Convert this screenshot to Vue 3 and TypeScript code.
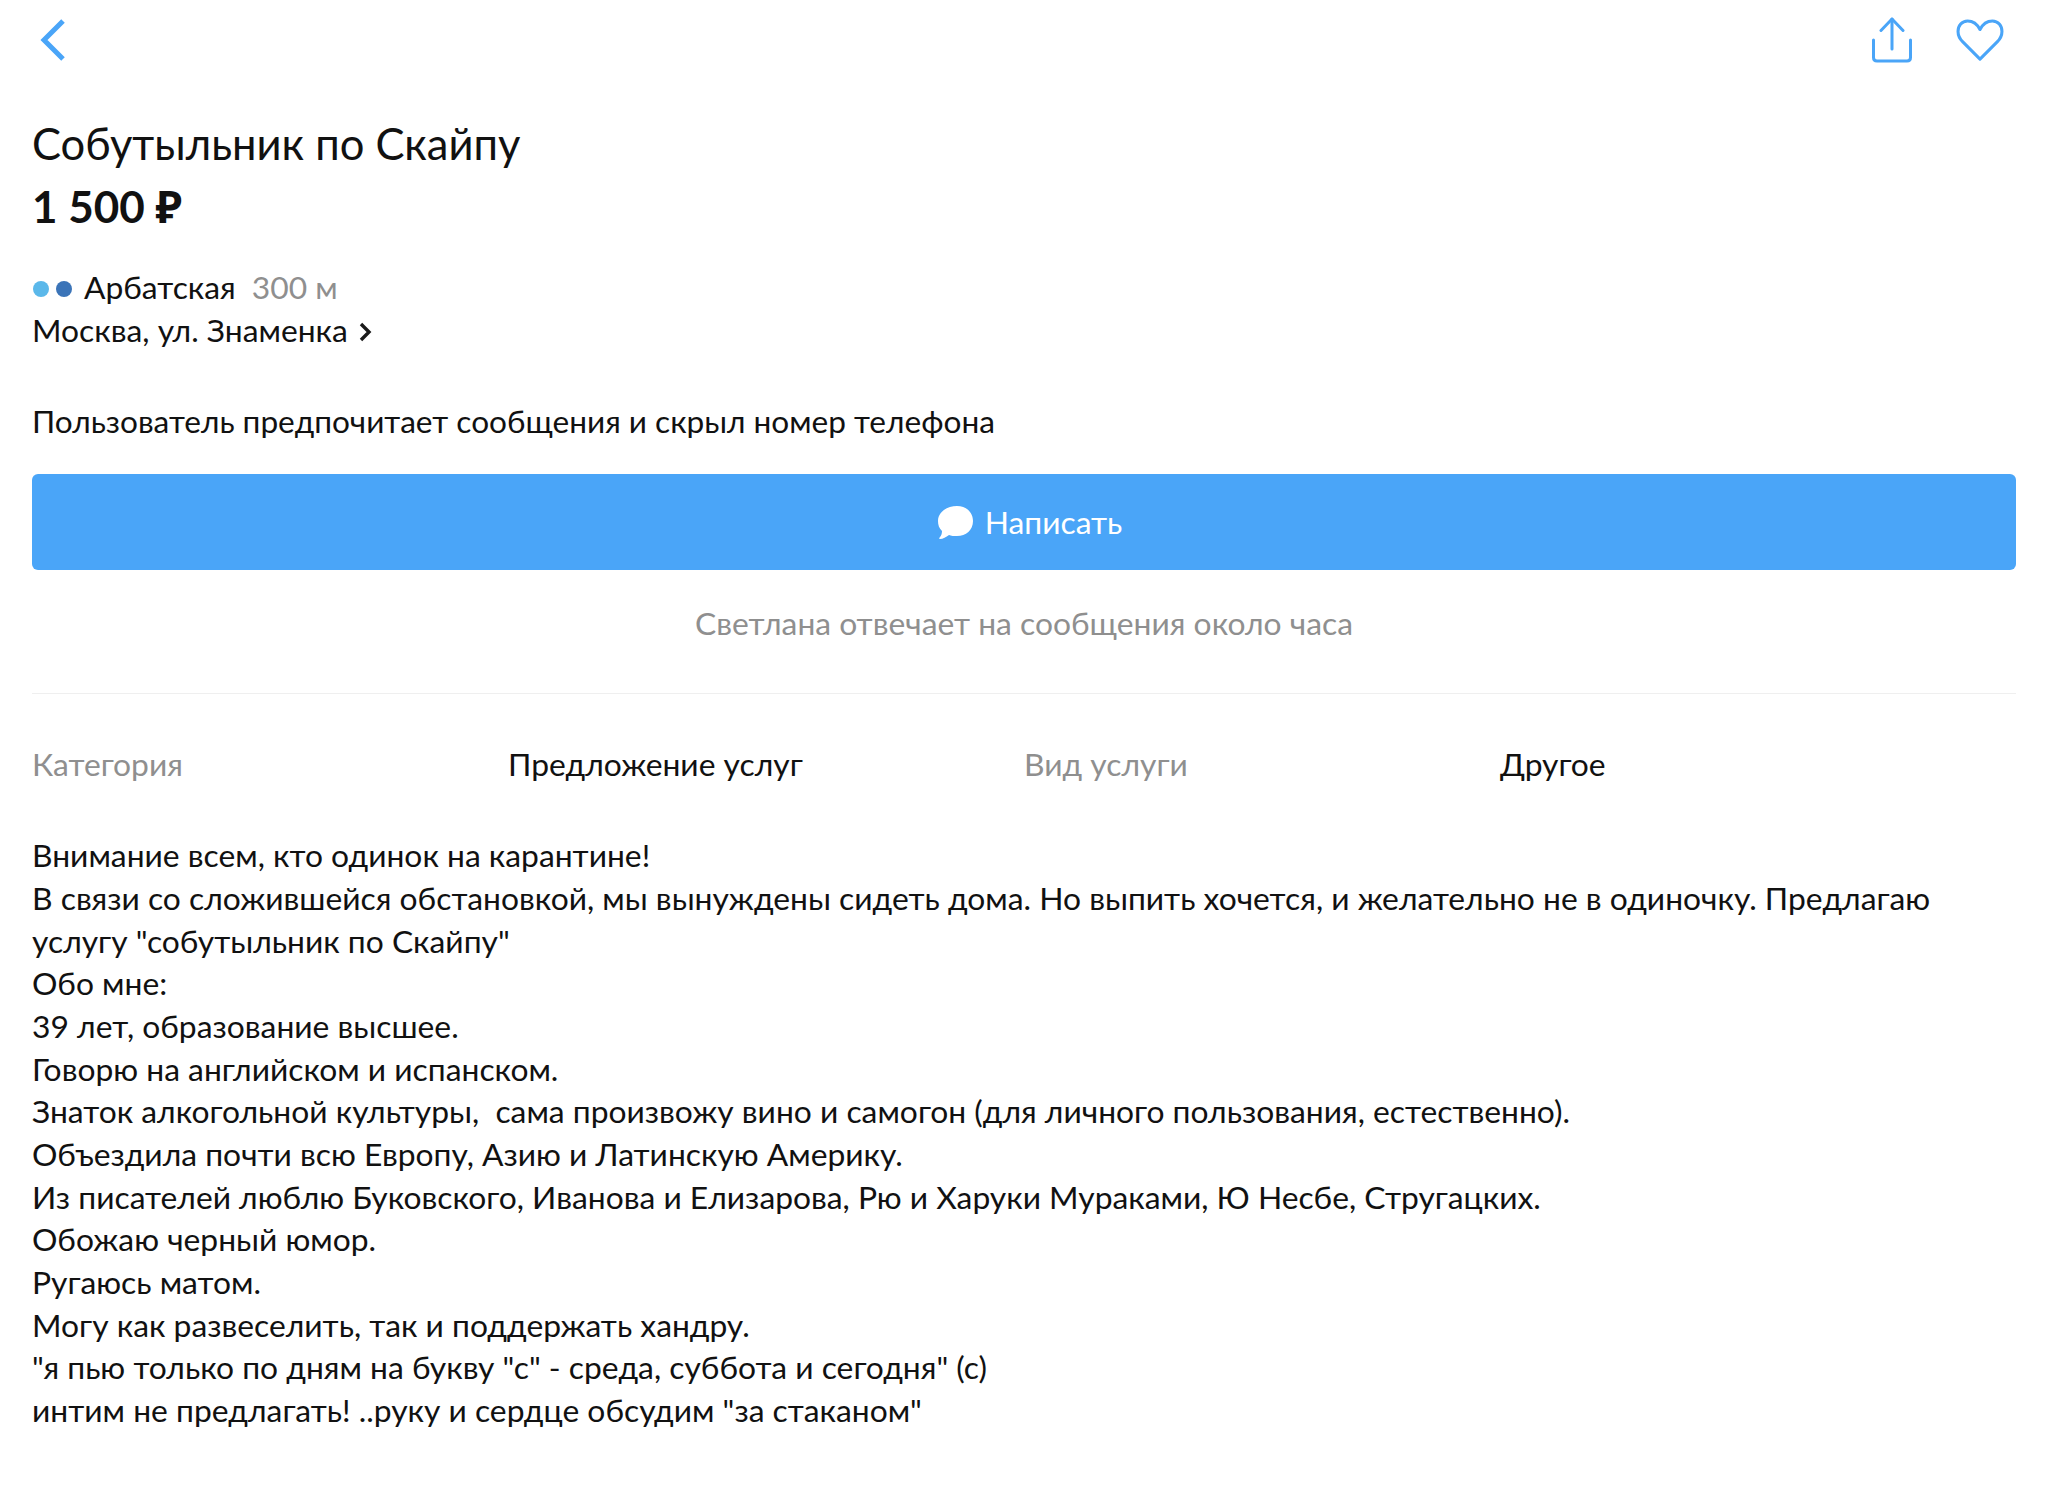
<template>
  <div class="page">
    <header class="topbar">
      <svg class="back" width="32" height="44" viewBox="0 0 32 44" fill="none">
        <path d="M27 3 L8 22 L27 41" stroke="#4aa5f8" stroke-width="5" />
      </svg>
      <div class="actions">
        <svg width="40" height="46" viewBox="0 0 40 46" fill="none" stroke="#4aa5f8" stroke-width="3" stroke-linecap="round" stroke-linejoin="round">
          <path d="M20 2 V32" />
          <path d="M9 13.5 L20 2 L31 13.5" />
          <path d="M1.5 23 V40.5 Q1.5 44 5 44 H35 Q38.5 44 38.5 40.5 V23" />
        </svg>
        <svg width="48" height="42" viewBox="0 0 50 44" fill="none" stroke="#4aa5f8" stroke-width="3.2" stroke-linejoin="round">
          <path d="M25 11 C22 5 17 2 12 2 C6 2 2 7 2 13 C2 18 4 21 7 24 L25 42 L43 24 C46 21 48 18 48 13 C48 7 44 2 38 2 C33 2 28 5 25 11 Z" />
        </svg>
      </div>
    </header>

    <h1 class="title">Собутыльник по Скайпу</h1>
    <div class="price">1 500 ₽</div>

    <div class="metro">
      <span class="dot light"></span>
      <span class="dot dark"></span>
      <span class="station">Арбатская</span>
      <span class="distance">300 м</span>
    </div>
    <div class="address">
      Москва, ул. Знаменка
      <svg class="chevron" width="14" height="22" viewBox="0 0 14 22" fill="none">
        <path d="M3 3 L11 11 L3 19" stroke="#1a1a1a" stroke-width="3.4" />
      </svg>
    </div>

    <p class="notice">Пользователь предпочитает сообщения и скрыл номер телефона</p>

    <button class="write">
      <svg width="35" height="33" viewBox="0 0 35 33" fill="#fff">
        <path d="M19 0 C28 0 35 6 35 15 C35 24 28 30 19 30 C16 30 13 30 11 29 C8 31 5 33 2 33 C1 33 1 32 2 31 C3 30 4 28 4 25 C1 22 0 19 0 15 C0 6 9 0 19 0 Z" />
      </svg>
      <span>Написать</span>
    </button>
    <p class="reply-time">Светлана отвечает на сообщения около часа</p>

    <dl class="params">
      <div v-for="param in params" :key="param.label" class="param">
        <dt>{{ param.label }}</dt>
        <dd>{{ param.value }}</dd>
      </div>
    </dl>

    <div class="description">
      <div v-for="line in lines" :key="line">{{ line }}</div>
    </div>
  </div>
</template>

<script setup lang="ts">
const params = [
  { label: 'Категория', value: 'Предложение услуг' },
  { label: 'Вид услуги', value: 'Другое' }
]

const lines = [
  'Внимание всем, кто одинок на карантине!',
  'В связи со сложившейся обстановкой, мы вынуждены сидеть дома. Но выпить хочется, и желательно не в одиночку. Предлагаю услугу "собутыльник по Скайпу"',
  'Обо мне:',
  '39 лет, образование высшее.',
  'Говорю на английском и испанском.',
  'Знаток алкогольной культуры,  сама произвожу вино и самогон (для личного пользования, естественно).',
  'Объездила почти всю Европу, Азию и Латинскую Америку.',
  'Из писателей люблю Буковского, Иванова и Елизарова, Рю и Харуки Мураками, Ю Несбе, Стругацких.',
  'Обожаю черный юмор.',
  'Ругаюсь матом.',
  'Могу как развеселить, так и поддержать хандру.',
  '"я пью только по дням на букву "с" - среда, суббота и сегодня" (с)',
  'интим не предлагать! ..руку и сердце обсудим "за стаканом"'
]
</script>

<style scoped>
.page {
  width: 2048px;
  height: 1486px;
  box-sizing: border-box;
  padding: 0 32px;
  background: #fff;
  color: #111;
  font-family: Lato, "Noto Sans", sans-serif;
  font-size: 31.8px;
  line-height: 42.67px;
  overflow: hidden;
}

.topbar {
  display: flex;
  justify-content: space-between;
  align-items: center;
  padding-top: 17px;
  height: 46px;
}

.back {
  margin-left: 4px;
}

.actions {
  display: flex;
  align-items: center;
  gap: 44px;
  margin-right: 12px;
}

.title {
  margin: 49px 0 0;
  font-size: 43.5px;
  font-weight: 400;
  line-height: 63px;
}

.price {
  font-size: 44px;
  font-weight: 700;
  line-height: 62px;
}

.metro {
  display: flex;
  align-items: center;
  margin-top: 29px;
}

.dot {
  width: 16px;
  height: 16px;
  margin-top: 3px;
  margin-right: 7px;
  border-radius: 50%;
}

.light {
  margin-left: 1px;
  background: #5bb8ea;
}

.dark {
  background: #3b74b8;
}

.station {
  margin-left: 5px;
}

.distance {
  margin-left: 16px;
  color: #8f8f8f;
}

.address {
  display: flex;
  align-items: center;
  gap: 10px;
}

.chevron {
  margin-top: 3px;
}

.notice {
  margin: 49px 0 0;
  font-size: 31.6px;
}

.write {
  display: flex;
  align-items: center;
  justify-content: center;
  gap: 12px;
  width: 100%;
  height: 96px;
  margin-top: 31px;
  padding: 0 0 0 12px;
  border: 0;
  border-radius: 6px;
  background: #4aa5f8;
  color: #fff;
  font: inherit;
}

.reply-time {
  margin: 32px 0 0;
  padding-bottom: 48px;
  border-bottom: 1px solid #efefef;
  color: #8f8f8f;
  text-align: center;
}

.params {
  display: grid;
  grid-template-columns: 1fr 1fr;
  margin: 49px 0 0;
}

.param {
  display: grid;
  grid-template-columns: 476px 1fr;
}

.param dt {
  color: #8f8f8f;
}

.param dd {
  margin: 0;
}

.description {
  margin-top: 49px;
  white-space: pre-wrap;
}
</style>
